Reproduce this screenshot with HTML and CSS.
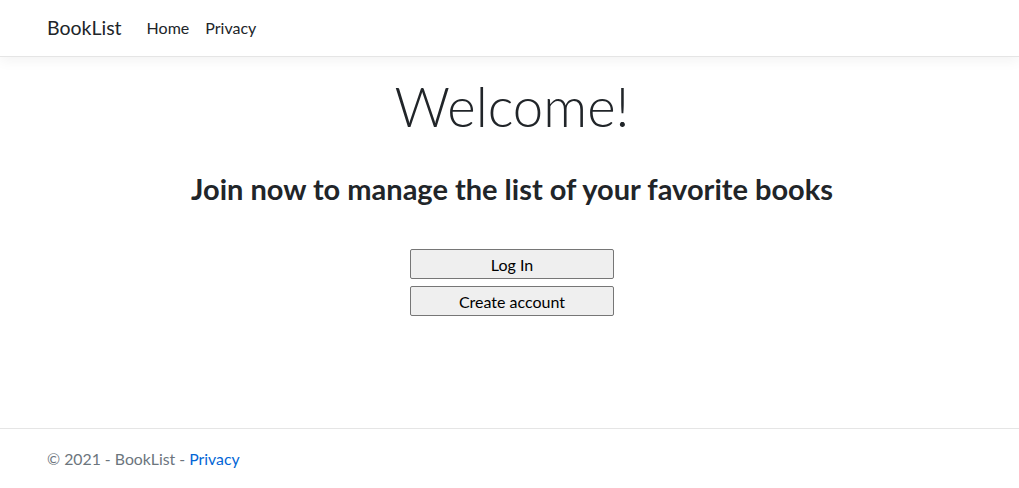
FILE: index.html
```html
<!DOCTYPE html>
<html lang="en">
<head>
<meta charset="utf-8">
<title>BookList</title>
<link rel="stylesheet" href="styles.css">
</head>
<body>
<div class="page">
  <header class="navbar">
    <div class="container nav-inner">
      <a class="brand" href="#">BookList</a>
      <nav class="nav-links">
        <a class="nav-link" href="#">Home</a>
        <a class="nav-link" href="#">Privacy</a>
      </nav>
    </div>
  </header>
  <main class="container main">
    <div class="hero">
      <h1 class="display">Welcome!</h1>
      <h3 class="subtitle">Join now to manage the list of your favorite books</h3>
      <div class="actions">
        <button class="btn" type="button">Log In</button>
        <button class="btn" type="button">Create account</button>
      </div>
    </div>
  </main>
  <footer class="footer">
    <div class="container footer-inner">
      &copy; 2021 - BookList - <a class="footer-link" href="#">Privacy</a>
    </div>
  </footer>
</div>
</body>
</html>
```
FILE: styles.css
```css
* { box-sizing: border-box; }
html, body { margin: 0; padding: 0; }
body {
  font-family: "Lato", "Open Sans", sans-serif;
  font-size: 16px;
  line-height: 1.5;
  color: #212529;
  background: #fff;
}
.page {
  min-height: 100vh;
  display: flex;
  flex-direction: column;
}
.container {
  width: 100%;
  max-width: 960px;
  margin: 0 auto;
  padding: 0 12.5px 0 17.5px;
}
.navbar {
  height: 57px;
  border-bottom: 1px solid #e5e5e5;
  box-shadow: 0 4px 12px rgba(0,0,0,.05);
  display: flex;
  align-items: center;
  background: #fff;
}
.nav-inner {
  display: flex;
  align-items: center;
}
.brand {
  font-size: 19.5px;
  color: #212529;
  text-decoration: none;
  margin-right: 25px;
}
.nav-links { display: flex; gap: 16px; }
.nav-link {
  color: #212529;
  text-decoration: none;
  font-size: 16px;
}
.main {
  flex: 1;
  padding-top: 17px;
}
.hero { text-align: center; }
.display {
  font-size: 54.5px;
  font-weight: 300;
  line-height: 1.2;
  margin: 0 0 33px;
}
.subtitle {
  font-size: 29px;
  font-weight: 700;
  line-height: 1.2;
  margin: 0 0 42px;
}
.actions {
  display: flex;
  flex-direction: column;
  align-items: center;
  gap: 7px;
}
.btn {
  width: 204px;
  height: 30px;
  font-family: inherit;
  font-size: 16px;
  color: #000;
  background: #efefef;
  border: 1px solid #767676;
  border-radius: 2px;
  padding: 0;
}
.footer {
  border-top: 1px solid #e5e5e5;
  height: 60px;
}
.footer-inner {
  line-height: 60px;
  color: #6c757d;
  font-size: 15.8px;
}
.footer-link { color: #0366d6; text-decoration: none; }
```
